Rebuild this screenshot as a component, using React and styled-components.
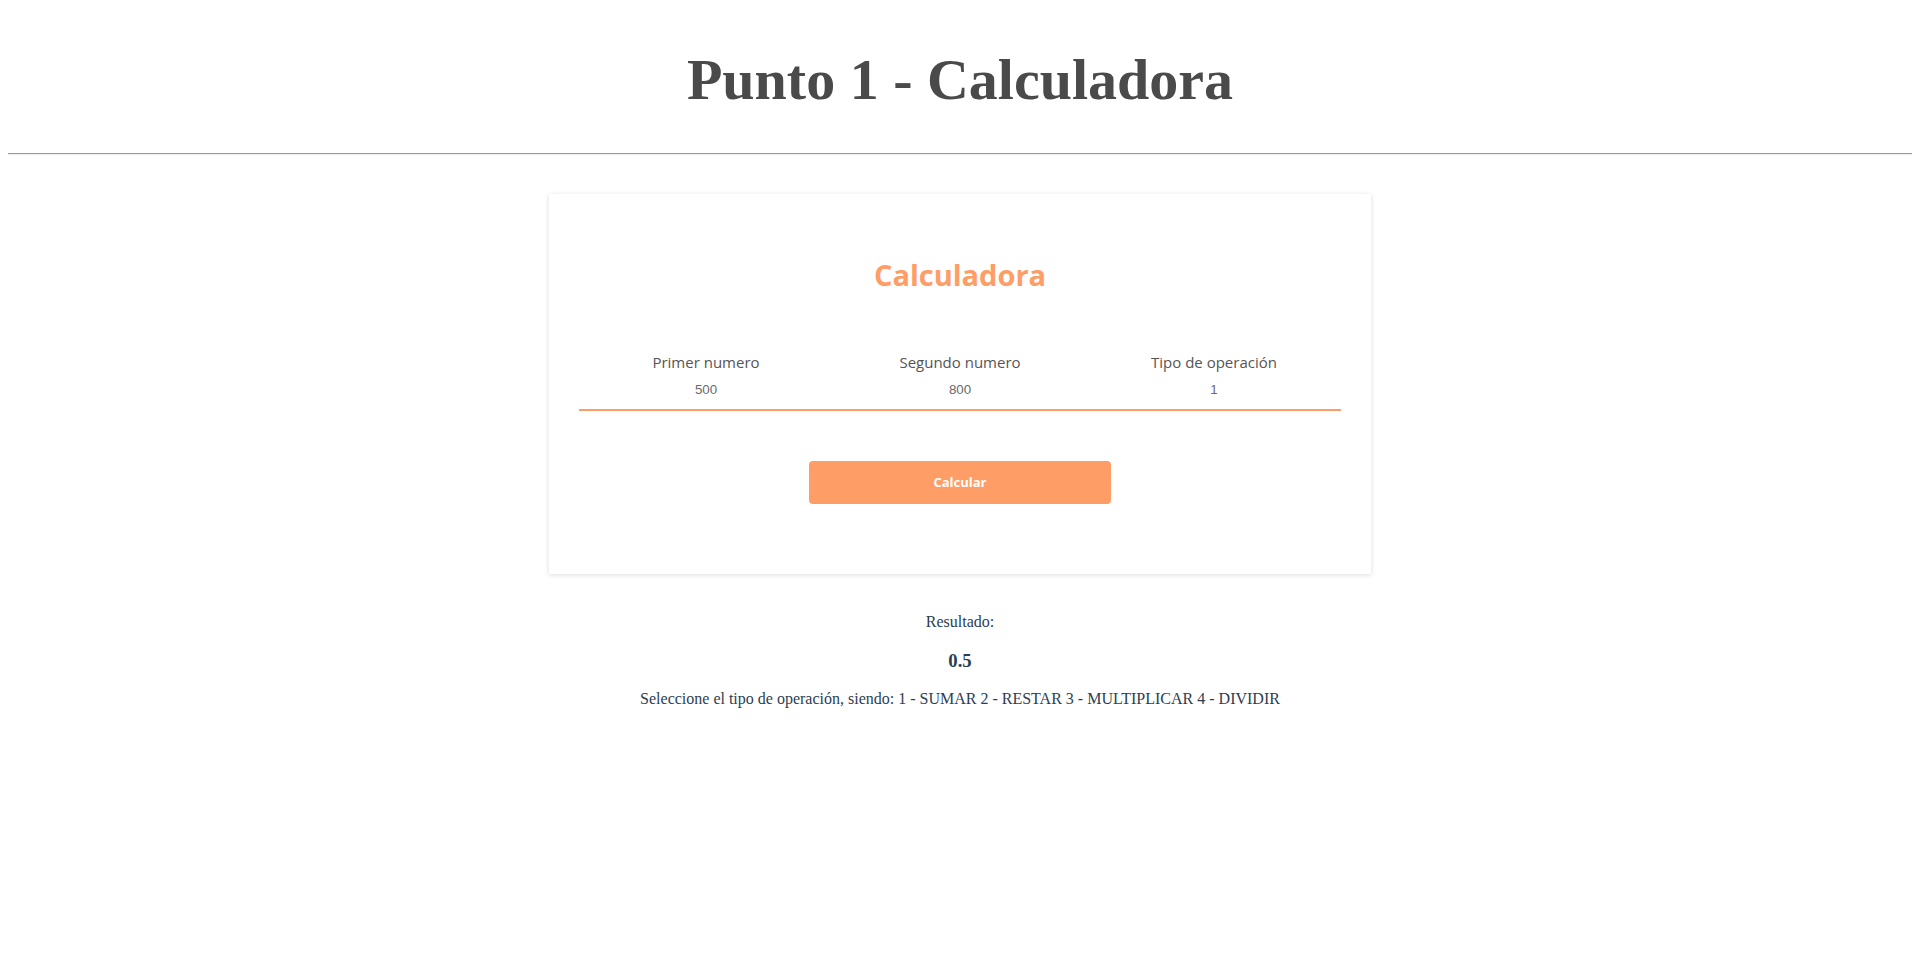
import React from "react";
import styled, { createGlobalStyle } from "styled-components";

const GlobalStyle = createGlobalStyle`
  html, body { background: #ffffff; }
  body {
    margin: 8px;
    font-family: "Liberation Serif", "Times New Roman", serif;
    color: #2c3e50;
  }
`;

const Page = styled.div`
  display: flex;
  flex-direction: column;
`;

const Title = styled.h1`
  margin: 39.4px 0 39.6px;
  font-family: "Liberation Serif", "Times New Roman", serif;
  font-weight: 700;
  font-size: 58px;
  line-height: 66px;
  text-align: center;
  color: #4a4a4a;
`;

const Divider = styled.hr`
  margin: 0;
  height: 0;
  border: none;
  border-top: 1px solid #9a9a9a;
  border-bottom: 1px solid #eeeeee;
`;

const Card = styled.section`
  align-self: center;
  box-sizing: border-box;
  width: 822px;
  margin-top: 39px;
  padding: 60.8px 30px 70px;
  background: #ffffff;
  box-shadow: 0 1px 5px rgba(0, 0, 0, 0.14);
  display: flex;
  flex-direction: column;
  align-items: center;
`;

const CardTitle = styled.h2`
  margin: 0;
  font-family: "Open Sans", "Segoe UI", sans-serif;
  font-weight: 700;
  font-size: 29px;
  line-height: 40px;
  color: #ff9d66;
`;

const FieldRow = styled.div`
  align-self: stretch;
  display: grid;
  grid-template-columns: repeat(3, 1fr);
  margin-top: 57.4px;
  padding-bottom: 10.6px;
  border-bottom: 2px solid #ff9d66;
`;

const Field = styled.label`
  display: flex;
  flex-direction: column;
  align-items: center;
  gap: 10.2px;
`;

const FieldLabel = styled.span`
  font-family: "Open Sans", "Segoe UI", sans-serif;
  font-size: 15px;
  line-height: 20px;
  color: #555555;
`;

const FieldInput = styled.input`
  width: 100%;
  box-sizing: border-box;
  padding: 0;
  border: none;
  outline: none;
  background: transparent;
  text-align: center;
  font-family: "Liberation Sans", Arial, sans-serif;
  font-size: 13.33px;
  line-height: 16px;
  height: 16px;
  color: #6a6a6a;
`;

const Button = styled.button`
  margin-top: 50px;
  width: 302px;
  height: 43px;
  border: none;
  border-radius: 4px;
  background: #ff9d66;
  color: #ffffff;
  font-family: "Open Sans", "Segoe UI", sans-serif;
  font-weight: 700;
  font-size: 13px;
  cursor: pointer;
`;

const Result = styled.div`
  margin-top: 39.4px;
  display: flex;
  flex-direction: column;
  align-items: center;
  text-align: center;
`;

const ResultLabel = styled.p`
  margin: 0;
  font-size: 16px;
  line-height: 18px;
`;

const ResultValue = styled.h3`
  margin: 19px 0 0;
  font-size: 18.72px;
  font-weight: 700;
  line-height: 22px;
`;

const Hint = styled.p`
  margin: 18px 0 0;
  font-size: 16px;
  line-height: 18px;
`;

const fields = [
  { label: "Primer numero", value: "500" },
  { label: "Segundo numero", value: "800" },
  { label: "Tipo de operación", value: "1" },
];

export default function App() {
  return (
    <Page>
      <GlobalStyle />
      <Title>Punto 1 - Calculadora</Title>
      <Divider />
      <Card>
        <CardTitle>Calculadora</CardTitle>
        <FieldRow>
          {fields.map((f) => (
            <Field key={f.label}>
              <FieldLabel>{f.label}</FieldLabel>
              <FieldInput type="text" defaultValue={f.value} />
            </Field>
          ))}
        </FieldRow>
        <Button type="button">Calcular</Button>
      </Card>
      <Result>
        <ResultLabel>Resultado:</ResultLabel>
        <ResultValue>0.5</ResultValue>
        <Hint>
          Seleccione el tipo de operación, siendo: 1 - SUMAR 2 - RESTAR 3 -
          MULTIPLICAR 4 - DIVIDIR
        </Hint>
      </Result>
    </Page>
  );
}
